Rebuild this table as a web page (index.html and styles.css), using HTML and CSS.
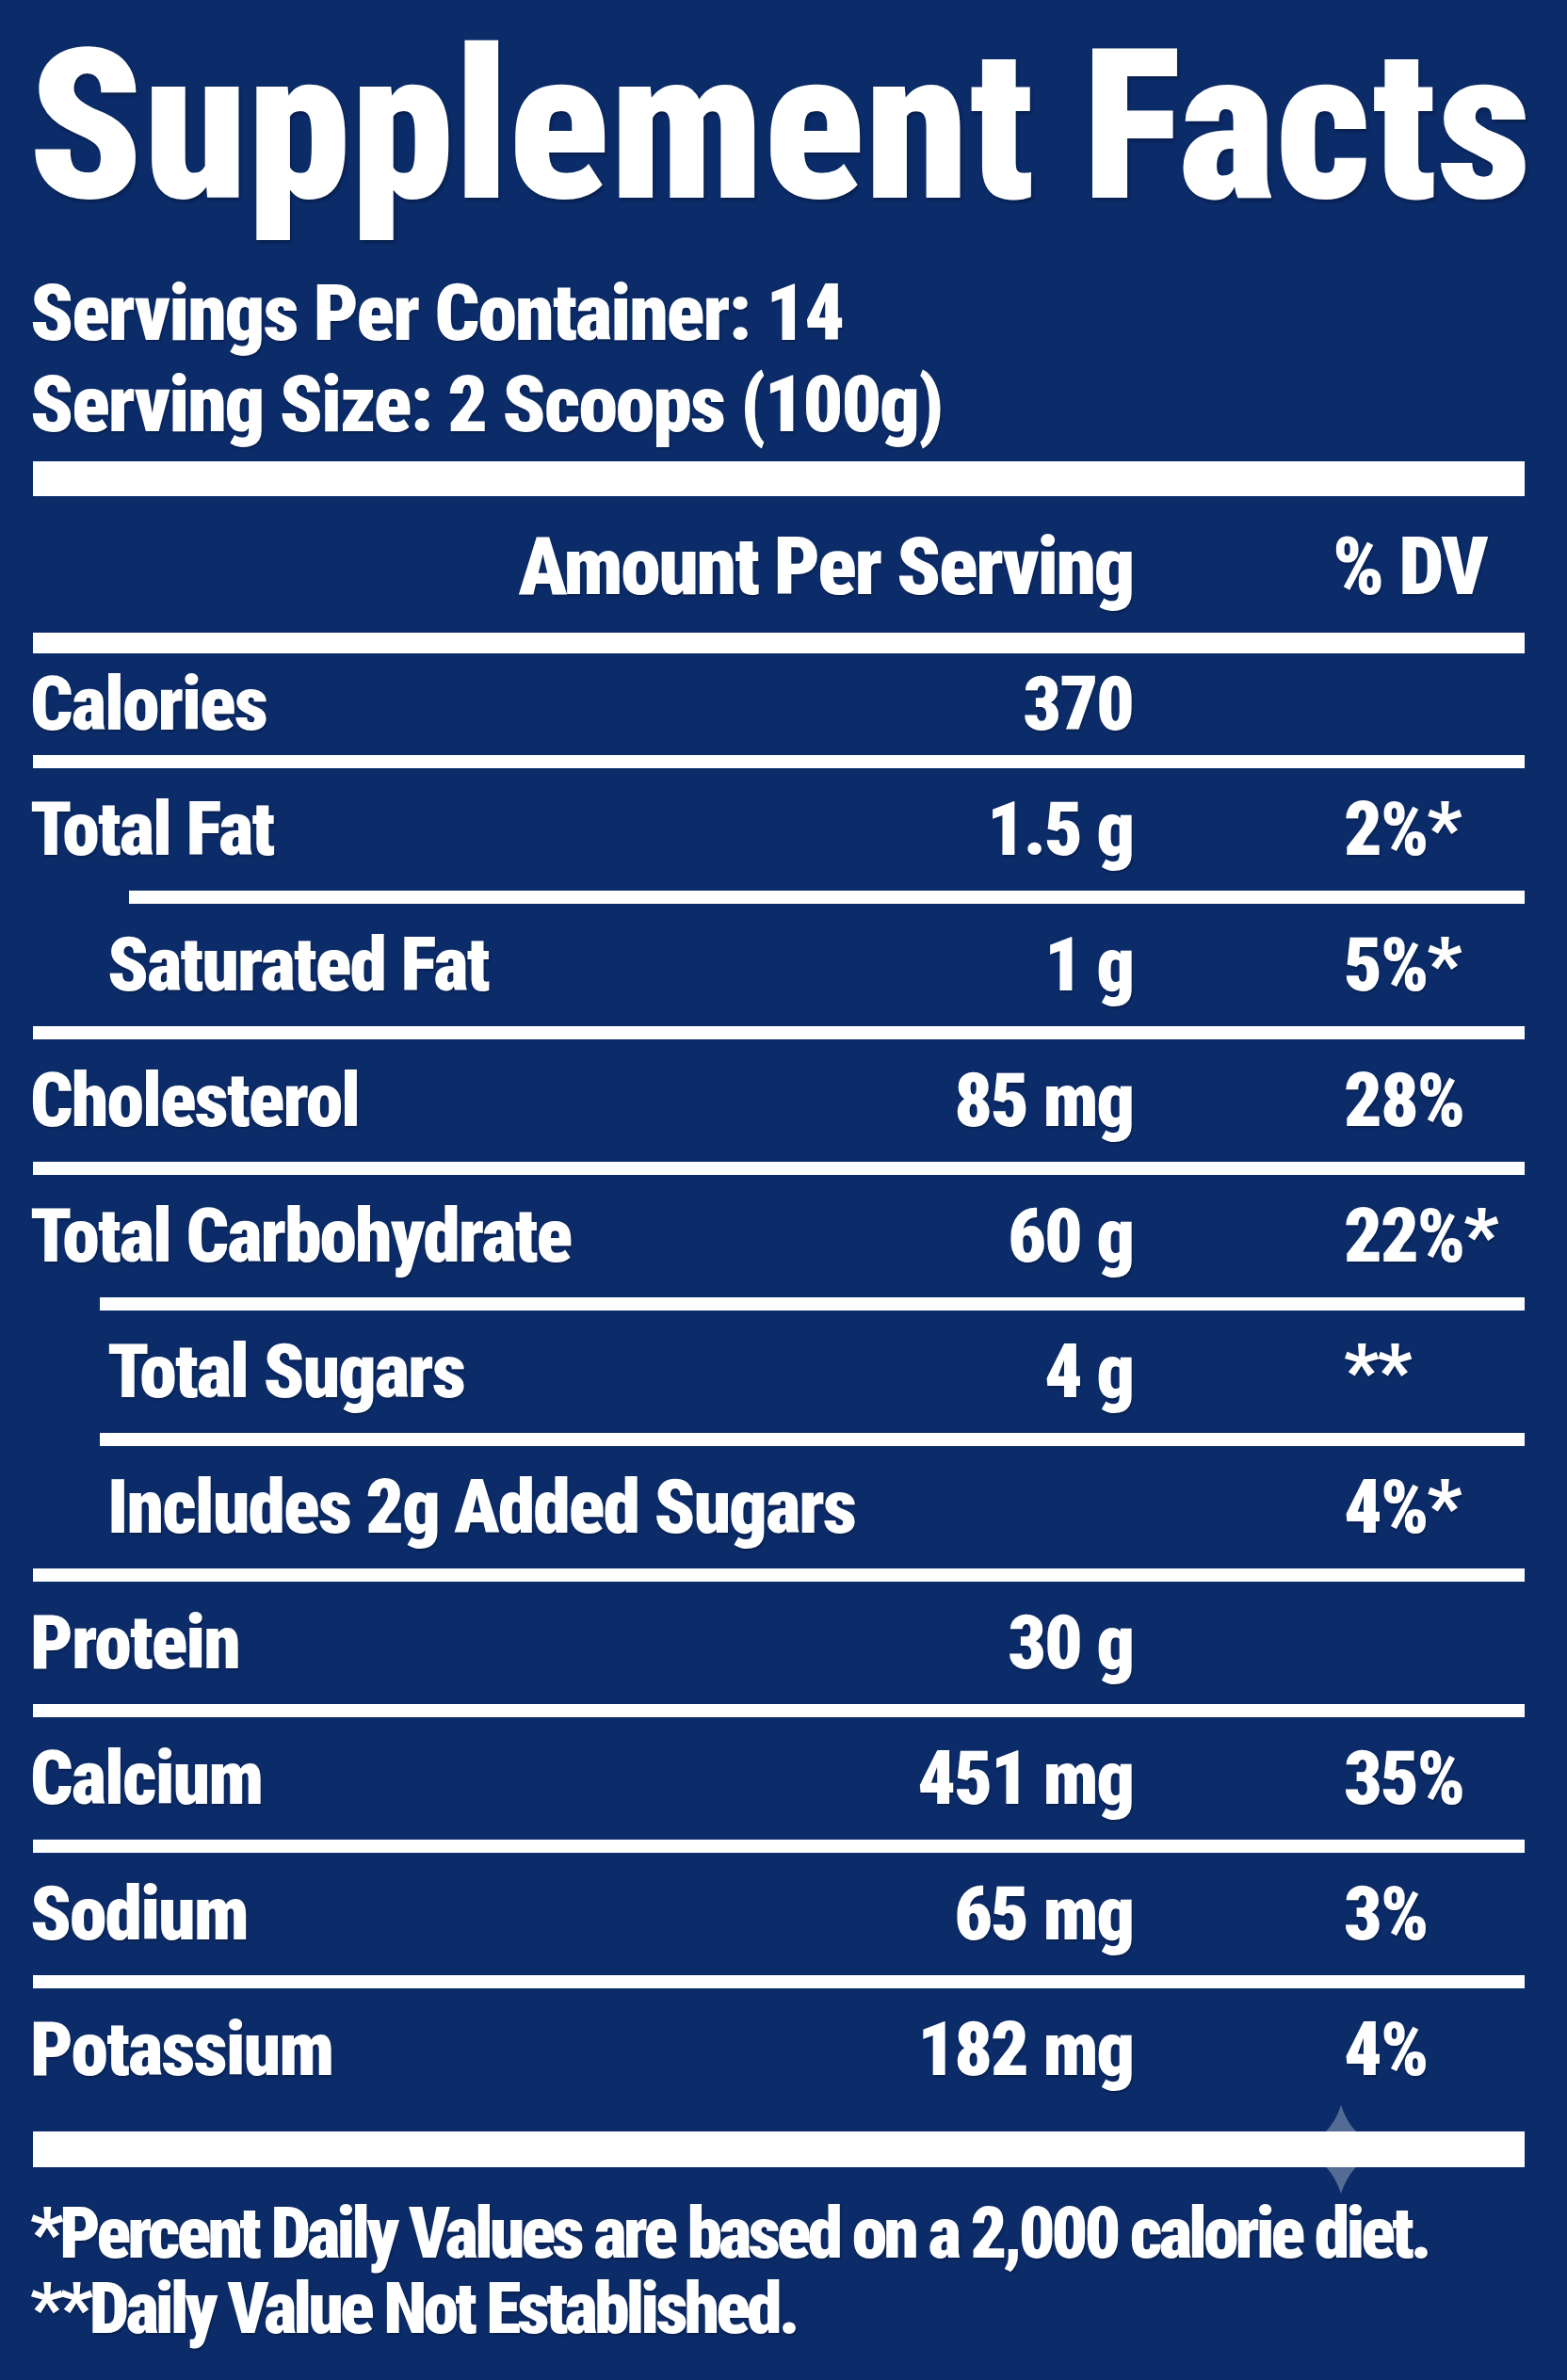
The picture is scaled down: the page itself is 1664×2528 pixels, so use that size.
FILE: index.html
```html
<!DOCTYPE html>
<html lang="en">
<head>
<meta charset="utf-8">
<title>Supplement Facts</title>
<link rel="stylesheet" href="styles.css">
</head>
<body>
<main class="label">
  <h1 class="title">Supplement Facts</h1>
  <div class="serving">
    <p>Servings Per Container: 14</p>
    <p>Serving Size: 2 Scoops (100g)</p>
  </div>
  <div class="bar bar-top"></div>
  <div class="row head">
    <span class="name"></span>
    <span class="amt">Amount Per Serving</span>
    <span class="dv dv-head">% DV</span>
  </div>
  <div class="bar bar-mid"></div>

  <div class="row row-first"><span class="name">Calories</span><span class="amt">370</span><span class="dv"></span></div>
  <div class="rule"></div>
  <div class="row"><span class="name">Total Fat</span><span class="amt">1.5 g</span><span class="dv">2%*</span></div>
  <div class="rule rule-in-a"></div>
  <div class="row"><span class="name sub">Saturated Fat</span><span class="amt">1 g</span><span class="dv">5%*</span></div>
  <div class="rule"></div>
  <div class="row"><span class="name">Cholesterol</span><span class="amt">85 mg</span><span class="dv">28%</span></div>
  <div class="rule"></div>
  <div class="row"><span class="name">Total Carbohydrate</span><span class="amt">60 g</span><span class="dv">22%*</span></div>
  <div class="rule rule-in-b"></div>
  <div class="row"><span class="name sub">Total Sugars</span><span class="amt">4 g</span><span class="dv">**</span></div>
  <div class="rule rule-in-b"></div>
  <div class="row"><span class="name sub">Includes 2g Added Sugars</span><span class="amt"></span><span class="dv">4%*</span></div>
  <div class="rule"></div>
  <div class="row"><span class="name">Protein</span><span class="amt">30 g</span><span class="dv"></span></div>
  <div class="rule"></div>
  <div class="row"><span class="name">Calcium</span><span class="amt">451 mg</span><span class="dv">35%</span></div>
  <div class="rule"></div>
  <div class="row"><span class="name">Sodium</span><span class="amt">65 mg</span><span class="dv">3%</span></div>
  <div class="rule"></div>
  <div class="row"><span class="name">Potassium</span><span class="amt">182 mg</span><span class="dv">4%</span></div>

  <div class="bar-wrap">
    <div class="bar bar-end"></div>
    <svg class="sparkle" viewBox="0 0 100 100" aria-hidden="true">
      <path d="M50 0 Q62 38 100 50 Q62 62 50 100 Q38 62 0 50 Q38 38 50 0 Z"/>
    </svg>
  </div>

  <div class="notes">
    <p>*Percent Daily Values are based on a 2,000 calorie diet.</p>
    <p>**Daily Value Not Established.</p>
  </div>
</main>
</body>
</html>
```

FILE: styles.css
```css
html {
  background: #0b2b69;
}
body {
  margin: 0;
  background: #0b2b69;
  color: #ffffff;
  font-family: Roboto, "Open Sans", "Liberation Sans", sans-serif;
  font-stretch: 75%;
  font-weight: 900;
}
.label {
  width: 1664px;
  height: 2528px;
  box-sizing: border-box;
  padding: 0 45px 0 32px;
  display: flex;
  flex-direction: column;
}
.title {
  margin: 14px 0 0 -2px;
  font-size: 222px;
  line-height: 240px;
  font-weight: 900;
  white-space: nowrap;
  text-shadow: 2px 3px 3px rgba(0, 0, 0, 0.25);
}
.serving {
  margin-top: 30px;
}
.serving p {
  margin: 0;
  font-size: 84px;
  line-height: 97px;
  letter-spacing: -2px;
  white-space: nowrap;
  text-shadow: 1px 2px 2px rgba(0, 0, 0, 0.25);
}
.bar {
  background: #ffffff;
  margin-left: 3px;
}
.bar-top {
  height: 37px;
  margin-top: 12px;
}
.bar-mid {
  height: 22px;
}
.row {
  display: grid;
  grid-template-columns: 1fr auto 416px;
  align-items: center;
  height: 130px;
  font-size: 80px;
  letter-spacing: -2px;
  white-space: nowrap;
  text-shadow: 1px 2px 2px rgba(0, 0, 0, 0.25);
}
.row.head {
  height: 145px;
  font-size: 86px;
  letter-spacing: -2.4px;
  padding-top: 4px;
  box-sizing: border-box;
}
.row.row-first {
  height: 108px;
}
.name {
  min-width: 0;
}
.name.sub {
  padding-left: 82px;
}
.amt {
  text-align: right;
}
.dv {
  padding-left: 224px;
}
.dv-head {
  padding-left: 212px;
}
.rule {
  height: 14px;
  background: #ffffff;
  margin-left: 3px;
}
.rule-in-a {
  margin-left: 105px;
}
.rule-in-b {
  margin-left: 74px;
}
.bar-wrap {
  position: relative;
  margin-top: 22px;
}
.bar-end {
  height: 38px;
}
.sparkle {
  position: absolute;
  left: 1345px;
  top: -28px;
  width: 94px;
  height: 94px;
  fill: rgba(255, 255, 255, 0.3);
}
.notes {
  margin-top: 30px;
}
.notes p {
  margin: 0;
  font-size: 76px;
  line-height: 80px;
  letter-spacing: -4px;
  white-space: nowrap;
  text-shadow: 1px 2px 2px rgba(0, 0, 0, 0.25);
}
```
